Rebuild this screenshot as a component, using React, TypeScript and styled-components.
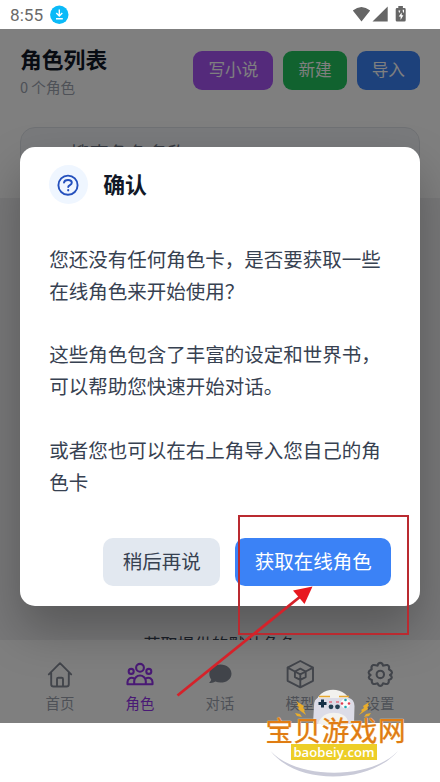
import React from 'react';
import styled, { createGlobalStyle } from 'styled-components';

const Global = createGlobalStyle`
  * { box-sizing: border-box; }
  html, body { margin: 0; padding: 0; background: #fff; }
  body { font-family: 'Noto Sans CJK SC', sans-serif; }
  button { font: inherit; border: 0; padding: 0; }
  h1, h2, p { margin: 0; }
`;

const Screen = styled.div`
  position: relative;
  width: 440px;
  height: 782px;
  overflow: hidden;
  display: flex;
  flex-direction: column;
  background: #fff;
`;

const StatusBar = styled.div`
  height: 29px;
  flex: none;
  display: flex;
  align-items: center;
  padding: 0 33px 0 10px;
`;

const Clock = styled.span`
  font: 400 17.2px/29px Roboto, sans-serif;
  color: #6a6a6a;
  width: 40px;
  padding-top: 1px;
`;

const StatusIcons = styled.div`
  margin-left: auto;
  display: flex;
  align-items: center;
`;

const AppArea = styled.div`
  position: relative;
  height: 695px;
  flex: none;
  display: flex;
  flex-direction: column;
  overflow: hidden;
`;

const Header = styled.header`
  height: 169px;
  flex: none;
  overflow: hidden;
  background: #fff;
`;

const TitleRow = styled.div`
  height: 98px;
  padding: 16px 20px 0;
  display: flex;
  align-items: flex-start;
  justify-content: space-between;
`;

const Title = styled.h1`
  font-size: 21.8px;
  line-height: 28px;
  font-weight: 700;
  color: #111827;
`;

const Count = styled.p`
  font-size: 14.6px;
  line-height: 20px;
  margin-top: 4px;
  color: #9ca3af;
`;

const Actions = styled.div`
  display: flex;
  gap: 10px;
  padding-top: 6px;
`;

const ActionButton = styled.button<{ $bg: string }>`
  height: 39px;
  padding: 0 15px 2px;
  border-radius: 9px;
  font-size: 16.65px;
  line-height: 37px;
  color: #fff;
  background: ${(p) => p.$bg};
`;

const SearchBox = styled.div`
  margin: 0 20px;
  height: 58px;
  padding-left: 49px;
  border: 1px solid #dfe3e9;
  border-radius: 15px;
  background: #f3f5f8;
  color: #6b7280;
  font-size: 19.5px;
  line-height: 50px;
`;

const List = styled.main`
  flex: 1;
  min-height: 0;
  overflow: hidden;
  display: flex;
  justify-content: center;
  align-items: flex-end;
  background: #f1f1f2;
`;

const Hint = styled.p`
  font-size: 17px;
  line-height: 24px;
  height: 8px;
  color: #374151;
  white-space: nowrap;
`;

const Nav = styled.nav`
  height: 84px;
  flex: none;
  display: flex;
  justify-content: space-between;
  padding: 18px 20px 0;
  background: #fff;
`;

const NavItem = styled.div<{ $active?: boolean }>`
  width: 80px;
  display: flex;
  flex-direction: column;
  align-items: center;
  font-size: 14.4px;
  line-height: 22px;
  gap: 2px;
  color: ${(p) => (p.$active ? '#9333ea' : '#9ca3af')};
  svg { color: ${(p) => (p.$active ? '#9333ea' : '#858b97')}; }
`;

const Backdrop = styled.div`
  position: absolute;
  inset: 0 0 1px;
  display: flex;
  justify-content: center;
  align-items: flex-start;
  padding-top: 118px;
  background: rgba(0, 0, 0, 0.5);
`;

const Dialog = styled.section`
  width: 400.6px;
  height: 459px;
  border-radius: 15px;
  padding: 18px 29px 20px;
  display: flex;
  flex-direction: column;
  background: #fff;
  box-shadow: 0 24px 48px rgba(0, 0, 0, 0.27);
`;

const DialogHead = styled.div`
  display: flex;
  align-items: center;
  gap: 15.5px;
`;

const Badge = styled.div`
  width: 39px;
  height: 39px;
  border-radius: 50%;
  display: grid;
  place-items: center;
  background: #eff6ff;
`;

const DialogTitle = styled.h2`
  font-size: 21.8px;
  line-height: 36px;
  font-weight: 700;
  color: #111827;
  padding-bottom: 1px;
`;

const Message = styled.div`
  margin-top: 39px;
  padding-left: 0.6px;
  display: flex;
  flex-direction: column;
  gap: 31.8px;
  font-size: 19.5px;
  line-height: 31.8px;
  color: #374151;
  white-space: nowrap;
`;

const Footer = styled.div`
  margin-top: auto;
  display: flex;
  justify-content: flex-end;
  gap: 15px;
`;

const DialogButton = styled.button<{ $primary?: boolean }>`
  height: 48px;
  padding: 0 19.5px 3px;
  border-radius: 10px;
  font-size: 19.5px;
  color: ${(p) => (p.$primary ? '#fff' : '#374151')};
  background: ${(p) => (p.$primary ? '#3b82f6' : '#e2e8f0')};
`;

const Annotation = styled.svg`
  position: absolute;
  left: 0;
  top: 0;
  pointer-events: none;
`;

const Watermark = styled.div`
  position: absolute;
  left: 264px;
  top: 686px;
  width: 144px;
  height: 92px;
  display: flex;
  flex-direction: column;
  align-items: flex-start;
`;

const WatermarkArt = styled.svg`
  position: absolute;
  inset: 0;
`;

const SiteName = styled.div`
  position: relative;
  margin: 28px 0 0 1.5px;
  height: 30px;
  font-size: 27.6px;
  line-height: 30px;
  font-weight: 400;
  letter-spacing: 0.5px;
  white-space: nowrap;
  color: #e07c12;
  -webkit-text-stroke: 0.25px #e07c12;
  text-shadow: 0 0 1px #fff0c8, 0 0 1px #fff0c8;
`;

const SiteUrl = styled.div`
  position: relative;
  margin-left: 27px;
  width: 86px;
  height: 16px;
  text-align: center;
  font: 600 13.2px/16px 'Open Sans', sans-serif;
  color: #fff;
  background: #edce27;
`;

const line = {
  fill: 'none',
  stroke: 'currentColor',
  strokeWidth: 1.9,
  strokeLinejoin: 'round' as const,
  strokeLinecap: 'round' as const,
};

const HomeIcon = () => (
  <svg width="28" height="32" viewBox="0 0 28 32" {...line}>
    <path d="M2.8 16.4 14 5.2l11.2 11.2M5.2 15v11.2q0 2.3 2.3 2.3h13q2.3 0 2.3-2.3V15M11 28v-7q0-1.3 1.3-1.3h3.4q1.3 0 1.3 1.3v7" />
  </svg>
);

const PeopleIcon = () => (
  <svg width="28" height="32" viewBox="0 0 28 32" {...line} strokeWidth={2.1}>
    <circle cx="14" cy="9.8" r="3.9" />
    <circle cx="5.2" cy="13.4" r="2.5" />
    <circle cx="22.8" cy="13.4" r="2.5" />
    <path d="M8.2 26.3v-3a5.8 5.8 0 0 1 11.6 0v3M8.3 20.4C4.5 18.6 1.5 20.9 1.5 24v2.3h25V24c0-3.1-3-5.4-6.8-3.6" />
  </svg>
);

const ChatIcon = () => (
  <svg width="28" height="32" viewBox="0 0 28 32">
    <path
      fill="currentColor"
      d="M14.5 6.6C8 6.6 3.3 10.7 3.3 15.8c0 2.3.8 4.2 1.9 5.7-.1 1.3-1.1 2.5-2.3 3.4 2.7.5 5-.2 6.5-1.3 1.5.7 3.2 1 5.1 1 6.4 0 11-3.9 11-8.9s-4.6-9.1-11-9.1Z"
    />
  </svg>
);

const CubeIcon = () => (
  <svg width="28" height="32" viewBox="0 0 28 32" {...line}>
    <path d="M14.3 3 27 9.6v13.2l-12.7 6.6L1.6 22.8V9.6ZM1.6 9.6l7.3 3.9M27 9.6l-7.3 3.9M14.3 21.8v7.6M14.3 10.7l5.4 2.8v5.6l-5.4 2.8-5.4-2.8v-5.6ZM8.9 13.5l5.4 2.8 5.4-2.8M14.3 16.3v5.5" />
  </svg>
);

const GearIcon = () => (
  <svg width="28" height="32" viewBox="0 0 28 32" {...line} strokeWidth={2.1}>
    <circle cx="14.3" cy="16.4" r="3.7" />
    <path d="M14.3 4.9c1.4 0 2.4.8 2.7 2.7 1.7 0 3-1.1 4.6-.5 1.2.5 1.9 2 1.3 4.2 1.6 1 3.1 1.6 3.1 3.2 0 1.3-.8 1.9-2 2.5 1.2.7 1.8 1.3 1.8 2.5-.2 1.6-1.5 1.8-3.1 2.5.4 2.1-.2 3.5-1.5 3.9-1.4.4-2.7-.5-4.2-.6-.7 1.8-1.4 2.6-2.7 2.6s-2-.8-2.7-2.6c-1.5.1-2.8 1-4.2.6-1.3-.4-1.9-1.8-1.5-3.9-1.6-.7-2.9-.9-3.1-2.5 0-1.2.6-1.8 1.8-2.5-1.2-.6-2-1.2-2-2.5 0-1.6 1.5-2.2 3.1-3.2-.6-2.2.1-3.7 1.3-4.2 1.6-.6 2.9.5 4.6.5.3-1.9 1.3-2.7 2.7-2.7Z" />
  </svg>
);

const navItems = [
  { label: '首页', Icon: HomeIcon },
  { label: '角色', Icon: PeopleIcon, active: true },
  { label: '对话', Icon: ChatIcon },
  { label: '模型', Icon: CubeIcon },
  { label: '设置', Icon: GearIcon },
];

const DownloadBadge = () => (
  <svg width="19" height="20" viewBox="0 0 19 20">
    <circle cx="9.3" cy="9.8" r="9.2" fill="#0bbaf8" />
    <path d="M9.3 4.4v6M6.3 8.1l3 3 3-3M6 13.8h6.8" fill="none" stroke="#fff" strokeWidth="1.4" />
  </svg>
);

const SignalIcons = () => (
  <svg width="55" height="17" viewBox="0 0 55 17" fill="#666">
    <path d="M.8 4.6Q9.4-2.4 18.2 4.6L9.5 15.6ZM20.5 15.6 35.7.5v15.1ZM46.3 0h4.6v2h1.5q1.3 0 1.3 1.3v11q0 1.3-1.3 1.3h-7.4q-1.3 0-1.3-1.3v-11Q43.7 2 45 2h1.3Z" />
    <path d="m49.7 6.5-3 4h1.9v3.6l2.8-4.9h-1.7ZM46.4 4.5h2l-1.2 2.8M50.6 3.8h1.4v2.6h-1Z" fill="#fff" />
  </svg>
);

const Mascot = () => (
  <WatermarkArt width="144" height="92" viewBox="0 0 144 92">
    <path d="M6.5 65C33 94 107 94 134 65 106 98 34 100 6.5 65Z" fill="#c9cad8" />
    <path d="M51 20C53-1 84-2 88 20v18H51Z" fill="#f2f1ee" />
    <path d="M54 12h31q5 1 5.5 8l-.5 18h-5c-4-15-27-15-31 0h-5l1-18q0-7 4-8Z" fill="#dcdce7" />
    <path d="M57 36c1-12 26-12 27 0v3H57Z" fill="#f4f3ef" />
    <path d="M55 10.5h11M75 10.5h10" stroke="#e7a72e" strokeWidth="1.6" />
    <path d="M54.5 17.5h8M58.5 13.5v8" stroke="#152f45" strokeWidth="3" />
    <circle cx="67" cy="20.8" r="2.4" fill="#233f52" />
    <circle cx="73.5" cy="20.8" r="2.4" fill="#233f52" />
    <path d="M65 16h3M72 16h3" stroke="#e33b50" strokeWidth="1.2" />
    <circle cx="81.5" cy="17.5" r="4.8" fill="#fafafa" />
    <circle cx="81.5" cy="14" r="1.3" fill="#20a6b4" />
    <circle cx="81.5" cy="21" r="1.3" fill="#20a6b4" />
    <circle cx="78" cy="17.5" r="1.3" fill="#e33b50" />
    <circle cx="85" cy="17.5" r="1.3" fill="#e33b50" />
    <path d="m32 15 8 5-1 2 2 2-1 1 2 4-8-6 1-2-2-1 1-2ZM107 15l-8 5 1 2-3 2 1 1-3 4 9-6-1-2 2-1-1-2ZM31 27l5 1 2 3-5-1ZM107 27l-5 1-2 3 5-1Z" fill="#e9ad2b" />
  </WatermarkArt>
);

export default function App() {
  return (
    <Screen>
      <Global />
      <StatusBar>
        <Clock>8:55</Clock>
        <DownloadBadge />
        <StatusIcons>
          <SignalIcons />
        </StatusIcons>
      </StatusBar>
      <AppArea>
        <Header>
          <TitleRow>
            <div>
              <Title>角色列表</Title>
              <Count>0 个角色</Count>
            </div>
            <Actions>
              <ActionButton $bg="#a855f7">写小说</ActionButton>
              <ActionButton $bg="#22c55e">新建</ActionButton>
              <ActionButton $bg="#3b82f6">导入</ActionButton>
            </Actions>
          </TitleRow>
          <SearchBox>搜索角色名称</SearchBox>
        </Header>
        <List>
          <Hint>获取提供的默认角色</Hint>
        </List>
        <Nav>
          {navItems.map(({ label, Icon, active }) => (
            <NavItem key={label} $active={active}>
              <Icon />
              <span>{label}</span>
            </NavItem>
          ))}
        </Nav>
        <Backdrop>
          <Dialog>
            <DialogHead>
              <Badge>
                <svg width="22" height="22" viewBox="0 0 22 22" fill="none" stroke="#2450bd" strokeWidth="1.9" strokeLinecap="round" strokeLinejoin="round">
                  <circle cx="11" cy="11.2" r="9.6" />
                  <path d="M7 8.6c.5-3.5 7.8-3.5 7.8.1 0 2.5-3.6 2.2-3.6 4.4" />
                  <path d="M11.2 16.2v.1" strokeWidth="2.2" />
                </svg>
              </Badge>
              <DialogTitle>确认</DialogTitle>
            </DialogHead>
            <Message>
              <p>您还没有任何角色卡，是否要获取一些<br />在线角色来开始使用？</p>
              <p>这些角色包含了丰富的设定和世界书，<br />可以帮助您快速开始对话。</p>
              <p>或者您也可以在右上角导入您自己的角<br />色卡</p>
            </Message>
            <Footer>
              <DialogButton>稍后再说</DialogButton>
              <DialogButton $primary>获取在线角色</DialogButton>
            </Footer>
          </Dialog>
        </Backdrop>
      </AppArea>
      <Annotation width="440" height="782" viewBox="0 0 440 782">
        <rect x="239" y="516" width="169" height="118" fill="none" stroke="#ba2a30" strokeWidth="2" />
        <path d="M177.5 695.5 301 596" stroke="#d5222a" strokeWidth="2.8" />
        <path d="M312.5 586.5 293 590.5 304.5 604Z" fill="#e8181f" />
      </Annotation>
      <Watermark>
        <Mascot />
        <SiteName>宝贝游戏网</SiteName>
        <SiteUrl>baobeiy.com</SiteUrl>
      </Watermark>
    </Screen>
  );
}
